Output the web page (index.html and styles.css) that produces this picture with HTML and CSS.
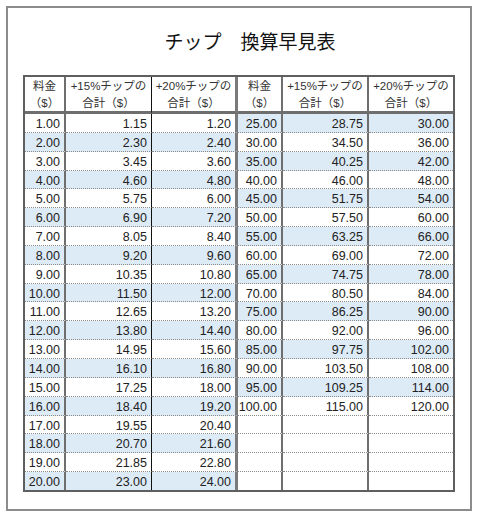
FILE: index.html
```html
<!DOCTYPE html>
<html lang="ja">
<head>
<meta charset="utf-8">
<title>チップ 換算早見表</title>
<link rel="stylesheet" href="styles.css">
</head>
<body>
<div class="frame">
  <h1 class="title">チップ　換算早見表</h1>
  <div class="sheet">
    <div class="h c1">料金<br>（$）</div>
    <div class="h c2">+15%チップの<br>合計（$）</div>
    <div class="h c3">+20%チップの<br>合計（$）</div>
    <div class="h c4">料金<br>（$）</div>
    <div class="h c5">+15%チップの<br>合計（$）</div>
    <div class="h c6">+20%チップの<br>合計（$）</div>

    <div class="n c1">1.00</div><div class="n c2">1.15</div><div class="n c3">1.20</div>
    <div class="n c4 b">25.00</div><div class="n c5 b">28.75</div><div class="n c6 b">30.00</div>

    <div class="n c1 b">2.00</div><div class="n c2 b">2.30</div><div class="n c3 b">2.40</div>
    <div class="n c4">30.00</div><div class="n c5">34.50</div><div class="n c6">36.00</div>

    <div class="n c1">3.00</div><div class="n c2">3.45</div><div class="n c3">3.60</div>
    <div class="n c4 b">35.00</div><div class="n c5 b">40.25</div><div class="n c6 b">42.00</div>

    <div class="n c1 b">4.00</div><div class="n c2 b">4.60</div><div class="n c3 b">4.80</div>
    <div class="n c4">40.00</div><div class="n c5">46.00</div><div class="n c6">48.00</div>

    <div class="n c1">5.00</div><div class="n c2">5.75</div><div class="n c3">6.00</div>
    <div class="n c4 b">45.00</div><div class="n c5 b">51.75</div><div class="n c6 b">54.00</div>

    <div class="n c1 b">6.00</div><div class="n c2 b">6.90</div><div class="n c3 b">7.20</div>
    <div class="n c4">50.00</div><div class="n c5">57.50</div><div class="n c6">60.00</div>

    <div class="n c1">7.00</div><div class="n c2">8.05</div><div class="n c3">8.40</div>
    <div class="n c4 b">55.00</div><div class="n c5 b">63.25</div><div class="n c6 b">66.00</div>

    <div class="n c1 b">8.00</div><div class="n c2 b">9.20</div><div class="n c3 b">9.60</div>
    <div class="n c4">60.00</div><div class="n c5">69.00</div><div class="n c6">72.00</div>

    <div class="n c1">9.00</div><div class="n c2">10.35</div><div class="n c3">10.80</div>
    <div class="n c4 b">65.00</div><div class="n c5 b">74.75</div><div class="n c6 b">78.00</div>

    <div class="n c1 b">10.00</div><div class="n c2 b">11.50</div><div class="n c3 b">12.00</div>
    <div class="n c4">70.00</div><div class="n c5">80.50</div><div class="n c6">84.00</div>

    <div class="n c1">11.00</div><div class="n c2">12.65</div><div class="n c3">13.20</div>
    <div class="n c4 b">75.00</div><div class="n c5 b">86.25</div><div class="n c6 b">90.00</div>

    <div class="n c1 b">12.00</div><div class="n c2 b">13.80</div><div class="n c3 b">14.40</div>
    <div class="n c4">80.00</div><div class="n c5">92.00</div><div class="n c6">96.00</div>

    <div class="n c1">13.00</div><div class="n c2">14.95</div><div class="n c3">15.60</div>
    <div class="n c4 b">85.00</div><div class="n c5 b">97.75</div><div class="n c6 b">102.00</div>

    <div class="n c1 b">14.00</div><div class="n c2 b">16.10</div><div class="n c3 b">16.80</div>
    <div class="n c4">90.00</div><div class="n c5">103.50</div><div class="n c6">108.00</div>

    <div class="n c1">15.00</div><div class="n c2">17.25</div><div class="n c3">18.00</div>
    <div class="n c4 b">95.00</div><div class="n c5 b">109.25</div><div class="n c6 b">114.00</div>

    <div class="n c1 b">16.00</div><div class="n c2 b">18.40</div><div class="n c3 b">19.20</div>
    <div class="n c4">100.00</div><div class="n c5">115.00</div><div class="n c6">120.00</div>

    <div class="n c1">17.00</div><div class="n c2">19.55</div><div class="n c3">20.40</div>
    <div class="n c4"></div><div class="n c5"></div><div class="n c6"></div>

    <div class="n c1 b">18.00</div><div class="n c2 b">20.70</div><div class="n c3 b">21.60</div>
    <div class="n c4"></div><div class="n c5"></div><div class="n c6"></div>

    <div class="n c1">19.00</div><div class="n c2">21.85</div><div class="n c3">22.80</div>
    <div class="n c4"></div><div class="n c5"></div><div class="n c6"></div>

    <div class="n c1 b">20.00</div><div class="n c2 b">23.00</div><div class="n c3 b">24.00</div>
    <div class="n c4"></div><div class="n c5"></div><div class="n c6"></div>
  </div>
</div>
</body>
</html>
```

FILE: styles.css
```css
html, body {
  margin: 0;
  background: #ffffff;
}

.frame {
  margin: 6px;
  width: 466px;
  height: 505px;
  box-sizing: border-box;
  border: 2px solid #8c8c8c;
}

.title {
  margin: 0;
  height: 67px;
  box-sizing: border-box;
  padding: 21px 0 22px 22px;
  text-align: center;
  font-family: "Noto Sans CJK JP", sans-serif;
  font-weight: 400;
  font-size: 19px;
  line-height: 24px;
  color: #111111;
}

.sheet {
  margin-left: 15px;
  width: 432px;
  box-sizing: border-box;
  border: 2px solid #5f5f5f;
  display: grid;
  grid-template-columns: 41px 86px 86px 45px 86px 84px;
  grid-template-rows: 37px repeat(19, 18.85px) 17.85px;
}

.sheet > div {
  box-sizing: border-box;
  border-bottom: 1px dotted #8a8a8a;
  white-space: nowrap;
}

.sheet > div:nth-last-child(-n+6) {
  border-bottom: none;
}

.c1, .c4, .c5 {
  border-right: 2px solid #6e6e6e;
}

.c2 {
  border-right: 1px solid #111111;
}

.c3 {
  border-right: 3px solid #7a7a7a;
}

.sheet > .h {
  border-bottom: 3px solid #6e6e6e;
  padding-top: 1px;
  text-align: center;
  font-family: "Liberation Sans", "Noto Sans CJK JP", sans-serif;
  font-size: 11.5px;
  line-height: 16.5px;
  color: #333333;
}

.n {
  text-align: right;
  padding: 2px 4px 0 0;
  font-family: "Liberation Sans", sans-serif;
  font-size: 12.5px;
  line-height: 16px;
  color: #222222;
}

.b {
  background: #ddebf7;
}
```
